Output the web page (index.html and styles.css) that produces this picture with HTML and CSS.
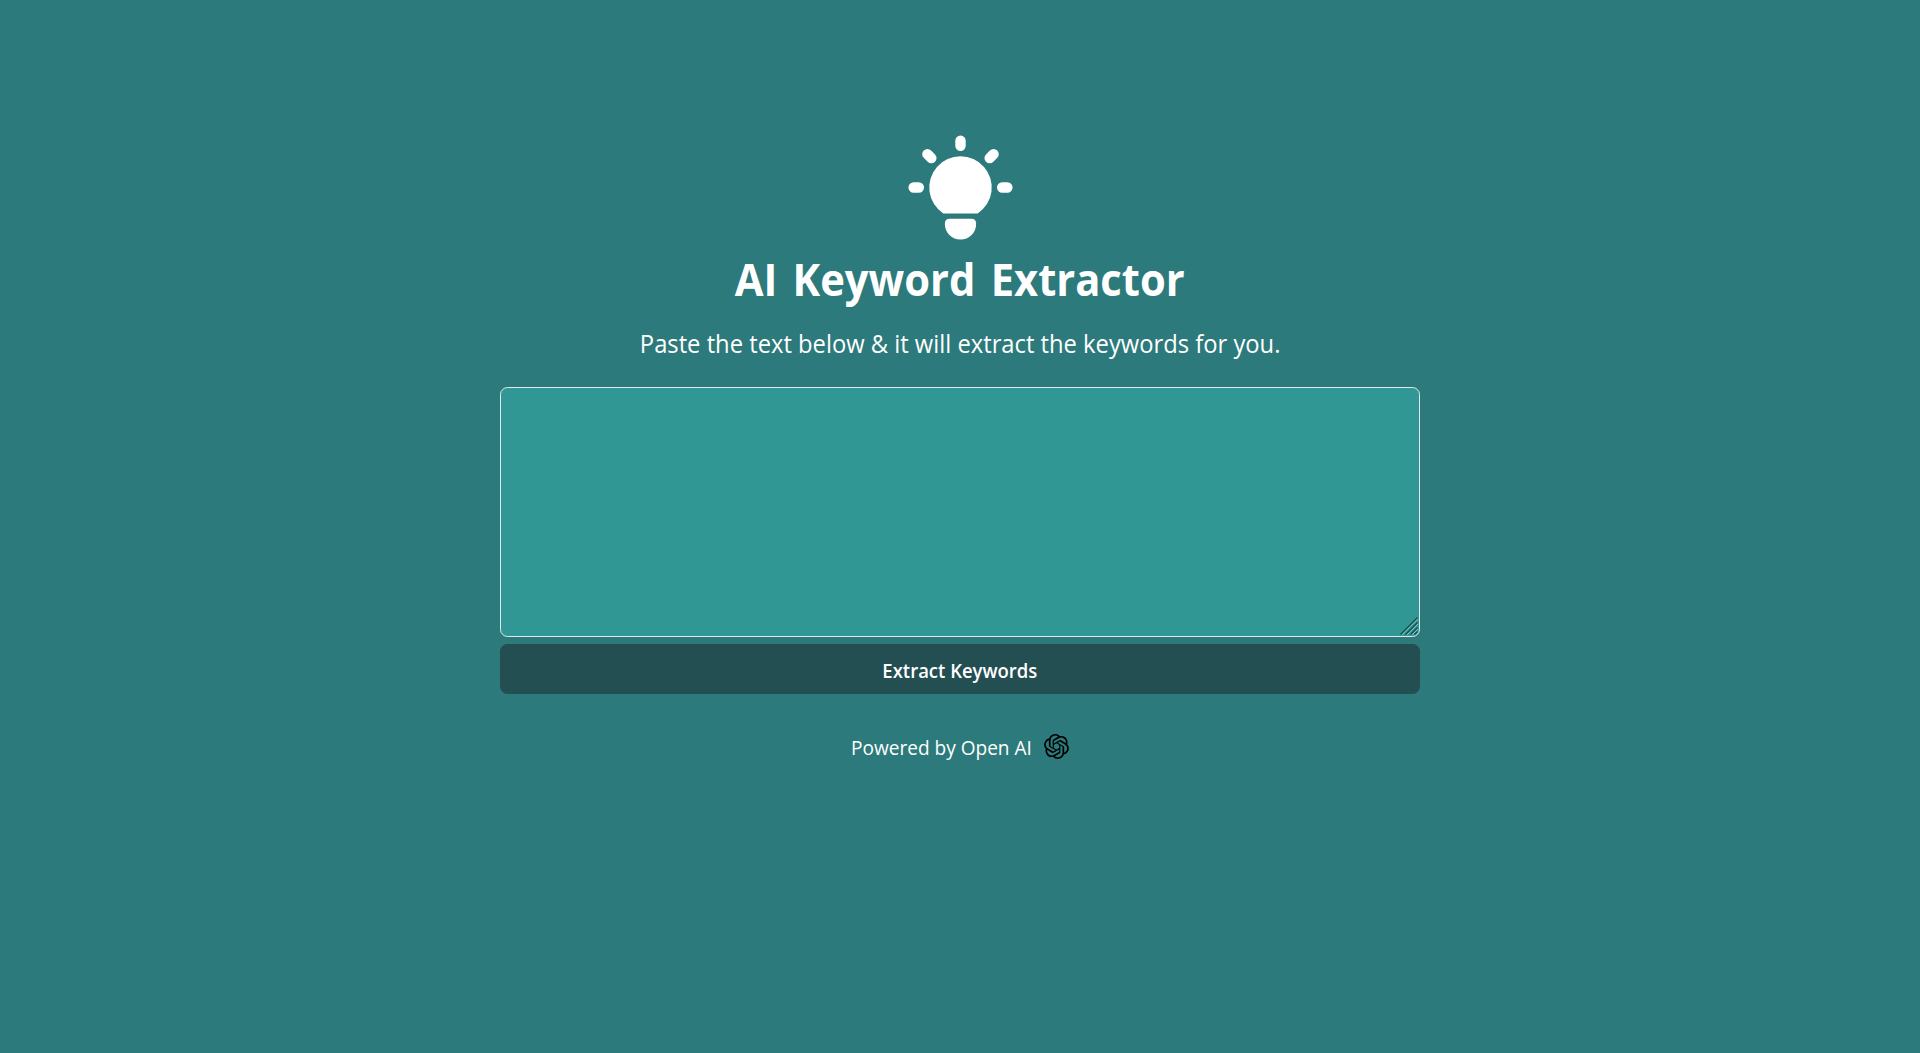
FILE: index.html
```
<!DOCTYPE html>
<html lang="en">
<head>
<meta charset="utf-8">
<title>AI Keyword Extractor</title>
<link rel="stylesheet" href="styles.css">
</head>
<body>
<main class="container">
  <svg class="bulb" viewBox="0 0 24 24" fill="#fff" aria-hidden="true">
    <path d="M8.7 17A6 6 0 1 1 15.3 17Z"/>
    <path d="M9.9 18H14.1Q15 18 15 18.9V19A3 3 0 0 1 9 19V18.9Q9 18 9.9 18Z"/>
    <path d="M12 3V4M3 12H4M20 12H21M5.65 5.6L6.4 6.35M18.35 5.6L17.6 6.35" fill="none" stroke="#fff" stroke-width="2" stroke-linecap="round"/>
  </svg>
  <h1 class="title">AI Keyword Extractor</h1>
  <p class="subtitle">Paste the text below &amp; it will extract the keywords for you.</p>
  <form class="form">
    <div class="field">
      <textarea class="input" aria-label="Text"></textarea>
      <svg class="grip" viewBox="0 0 18 18" fill="none" aria-hidden="true">
        <path d="M2 18L18 2M7 18L18 7M12 18L18 12M16 18L18 16" stroke="#7cc3c1"/>
        <path d="M.5 17.5L17.5 .5M5.5 17.5L17.5 5.5M10.5 17.5L17.5 10.5M14.5 17.5L17.5 14.5" stroke="#174b4c" stroke-width="1.1"/>
      </svg>
    </div>
    <button class="submit" type="button"><span class="submit-label">Extract Keywords</span></button>
  </form>
  <footer class="footer">
    <span class="powered">Powered by Open AI</span>
    <svg class="logo" viewBox="0 0 24 24" aria-hidden="true"><path d="M22.2819 9.8211a5.9847 5.9847 0 0 0-.5157-4.9108 6.0462 6.0462 0 0 0-6.5098-2.9A6.0651 6.0651 0 0 0 4.9807 4.1818a5.9847 5.9847 0 0 0-3.9977 2.9 6.0462 6.0462 0 0 0 .7427 7.0966 5.98 5.98 0 0 0 .511 4.9107 6.051 6.051 0 0 0 6.5146 2.9001A5.9847 5.9847 0 0 0 13.2599 24a6.0557 6.0557 0 0 0 5.7718-4.2058 5.9894 5.9894 0 0 0 3.9977-2.9001 6.0557 6.0557 0 0 0-.7475-7.0729zm-9.022 12.6081a4.4755 4.4755 0 0 1-2.8764-1.0408l.1419-.0804 4.7783-2.7582a.7948.7948 0 0 0 .3927-.6813v-6.7369l2.02 1.1686a.071.071 0 0 1 .038.052v5.5826a4.504 4.504 0 0 1-4.4945 4.4944zm-9.6607-4.1254a4.4708 4.4708 0 0 1-.5346-3.0137l.142.0852 4.783 2.7582a.7712.7712 0 0 0 .7806 0l5.8428-3.3685v2.3324a.0804.0804 0 0 1-.0332.0615L9.74 19.9502a4.4992 4.4992 0 0 1-6.1408-1.6464zM2.3408 7.8956a4.485 4.485 0 0 1 2.3655-1.9728V11.6a.7664.7664 0 0 0 .3879.6765l5.8144 3.3543-2.0201 1.1685a.0757.0757 0 0 1-.071 0l-4.8303-2.7865A4.504 4.504 0 0 1 2.3408 7.872zm16.5963 3.8558L13.1038 8.364 15.1192 7.2a.0757.0757 0 0 1 .071 0l4.8303 2.7913a4.4944 4.4944 0 0 1-.6765 8.1042v-5.6772a.79.79 0 0 0-.407-.667zm2.0107-3.0231l-.142-.0852-4.7735-2.7818a.7759.7759 0 0 0-.7854 0L9.409 9.2297V6.8974a.0662.0662 0 0 1 .0284-.0615l4.8303-2.7866a4.4992 4.4992 0 0 1 6.6802 4.66zM8.3065 12.863l-2.02-1.1638a.0804.0804 0 0 1-.038-.0567V6.0742a4.4992 4.4992 0 0 1 7.3757-3.4537l-.142.0805L8.704 5.459a.7948.7948 0 0 0-.3927.6813zm1.0976-2.3654l2.602-1.4998 2.6069 1.4998v2.9994l-2.5974 1.4997-2.6067-1.4997Z"/></svg>
  </footer>
</main>
</body>
</html>
```
FILE: styles.css
```
* {
  box-sizing: border-box;
  margin: 0;
}

body {
  min-height: 100vh;
  background: #2c7a7b;
  color: #fff;
  font-family: "Segoe UI", "Open Sans", "Noto Sans", sans-serif;
}

.container {
  display: flex;
  flex-direction: column;
  align-items: center;
  width: 920px;
  margin: 0 auto;
  padding-top: 125px;
}

.bulb {
  width: 125px;
  height: 125px;
}

.title {
  height: 59px;
  font-size: 45px;
  font-weight: 700;
  line-height: 58px;
  white-space: nowrap;
  word-spacing: 4.7px;
  transform: scaleX(0.927);
}

.subtitle {
  margin-top: 15px;
  font-size: 25px;
  line-height: 38px;
  white-space: nowrap;
  transform: scaleX(0.95);
}

.form {
  display: flex;
  flex-direction: column;
  gap: 7px;
  width: 100%;
  margin-top: 25px;
}

.field {
  position: relative;
}

.input {
  display: block;
  width: 100%;
  height: 250px;
  padding: 10px 20px;
  border: 1px solid #e2e8f0;
  border-radius: 7.5px;
  outline: none;
  background: #319795;
  color: #fff;
  font: inherit;
  font-size: 20px;
  resize: none;
}

.grip {
  position: absolute;
  right: 2px;
  bottom: 2px;
  width: 18px;
  height: 18px;
  pointer-events: none;
}

.submit {
  height: 50px;
  padding: 3px 0 0;
  border: 0;
  border-radius: 7.5px;
  background: #234e52;
  color: #fff;
  font-family: inherit;
  font-size: 20px;
  font-weight: 600;
  line-height: 24px;
}

.submit-label {
  display: inline-block;
  transform: scaleX(0.924);
}

.footer {
  display: flex;
  align-items: center;
  gap: 11px;
  height: 30px;
  margin-top: 38px;
}

.powered {
  width: 182px;
  padding-top: 2px;
  font-size: 20px;
  line-height: 30px;
  white-space: nowrap;
  transform: scaleX(0.953);
  transform-origin: left;
}

.logo {
  width: 25px;
  height: 25px;
  margin-bottom: 2px;
}
```
